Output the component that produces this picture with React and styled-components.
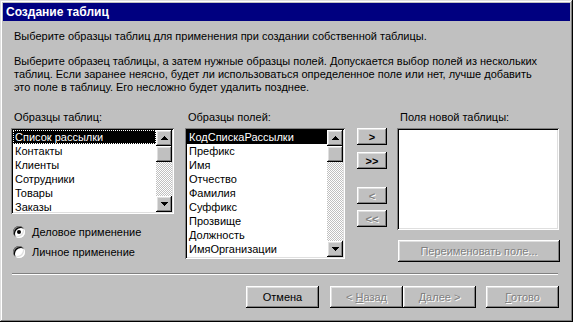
import React from 'react';
import styled, { createGlobalStyle } from 'styled-components';

const GlobalStyle = createGlobalStyle`
  html, body {
    margin: 0;
    padding: 0;
    background: #c0c0c0;
  }
  body {
    font-family: 'Liberation Sans', Arial, sans-serif;
    font-size: 11px;
    color: #000;
  }
`;

const raised = `
  box-shadow: inset -1px -1px #000, inset 1px 1px #fff,
    inset -2px -2px #808080, inset 2px 2px #dfdfdf;
`;

const sunken = `
  box-shadow: inset 1px 1px #808080, inset -1px -1px #fff,
    inset 2px 2px #000, inset -2px -2px #dfdfdf;
`;

const Window = styled.div`
  width: 573px;
  height: 322px;
  box-sizing: border-box;
  padding: 3px;
  background: #c0c0c0;
  box-shadow: inset -1px -1px #000, inset 1px 1px #dfdfdf,
    inset -2px -2px #808080, inset 2px 2px #fff;
  display: flex;
  flex-direction: column;
`;

const TitleBar = styled.div`
  height: 18px;
  flex: none;
  background: #000080;
  color: #fff;
  font-weight: bold;
  font-size: 12px;
  display: flex;
  align-items: center;
  padding-left: 3px;
`;

const Intro = styled.div`
  padding: 9px 0 0 11px;
  line-height: 13px;
`;

const Para = styled.p`
  margin: ${p => p.$mt || 0}px 0 0 0;
`;

const Columns = styled.div`
  display: flex;
  margin-top: 17px;
  padding-left: 8px;
  height: 162px;
`;

const Column = styled.div`
  width: ${p => p.$w}px;
  margin-left: ${p => p.$ml || 0}px;
  display: flex;
  flex-direction: column;
`;

const Label = styled.div`
  height: 13px;
  line-height: 13px;
  padding-left: 3px;
`;

const ListBox = styled.div`
  margin-top: 4px;
  height: ${p => p.$h}px;
  box-sizing: border-box;
  padding: 2px;
  background: #fff;
  ${sunken}
  display: flex;
  overflow: hidden;
`;

const Items = styled.div`
  flex: 1;
  overflow: hidden;
`;

const Item = styled.div`
  height: 14px;
  line-height: 14px;
  padding-left: 2px;
  white-space: nowrap;
  background: ${p => (p.$sel ? '#000' : 'transparent')};
  color: ${p => (p.$sel ? '#fff' : '#000')};
  outline: ${p => (p.$focus ? '1px dotted #fff' : 'none')};
  outline-offset: -1px;
`;

const ScrollBar = styled.div`
  width: 16px;
  flex: none;
  display: flex;
  flex-direction: column;
  background-color: #fff;
  background-image: conic-gradient(#c0c0c0 25%, #fff 0 50%, #c0c0c0 0 75%, #fff 0);
  background-size: 2px 2px;
`;

const ScrollButton = styled.div`
  width: 16px;
  height: 16px;
  flex: none;
  background: #c0c0c0;
  ${raised}
  display: flex;
  align-items: center;
  justify-content: center;
`;

const Track = styled.div`
  flex: 1;
`;

const RadioGroup = styled.div`
  margin-top: 8px;
  display: flex;
  flex-direction: column;
`;

const RadioRow = styled.label`
  height: 20px;
  display: flex;
  align-items: center;
  padding-left: 2px;
  gap: 7px;
`;

const RadioCircle = styled.span`
  width: 12px;
  height: 12px;
  border-radius: 50%;
  background: #fff;
  ${sunken}
  position: relative;
  flex: none;

  &::after {
    content: '';
    display: ${p => (p.$on ? 'block' : 'none')};
    position: absolute;
    left: 4px;
    top: 4px;
    width: 4px;
    height: 4px;
    border-radius: 50%;
    background: #000;
  }
`;

const Button = styled.div`
  width: ${p => p.$w}px;
  height: ${p => p.$h || 22}px;
  margin-top: ${p => p.$mt || 0}px;
  margin-left: ${p => p.$ml || 0}px;
  box-sizing: border-box;
  background: #c0c0c0;
  ${raised}
  display: flex;
  align-items: center;
  justify-content: center;
  white-space: pre;
  font-weight: ${p => (p.$bold ? 'bold' : 'normal')};
  color: ${p => (p.$disabled ? '#808080' : '#000')};
  text-shadow: ${p => (p.$disabled ? '1px 1px #fff' : 'none')};
`;

const Separator = styled.div`
  margin: 0 0 0 9px;
  width: 546px;
  height: 0;
  border-top: 1px solid #808080;
  border-bottom: 1px solid #fff;
`;

const ButtonRow = styled.div`
  display: flex;
  justify-content: flex-end;
  margin-top: 11px;
  padding-right: 11px;
`;

const Arrow = ({ down }) => (
  <svg width="7" height="4" viewBox="0 0 7 4">
    <path d={down ? 'M0 0H7L3.5 4Z' : 'M0 4H7L3.5 0Z'} fill="#000" shapeRendering="crispEdges" />
  </svg>
);

const Scroll = () => (
  <ScrollBar>
    <ScrollButton><Arrow /></ScrollButton>
    <ScrollButton />
    <Track />
    <ScrollButton><Arrow down /></ScrollButton>
  </ScrollBar>
);

const tables = ['Список рассылки', 'Контакты', 'Клиенты', 'Сотрудники', 'Товары', 'Заказы'];
const fields = [
  'КодСпискаРассылки', 'Префикс', 'Имя', 'Отчество', 'Фамилия', 'Суффикс',
  'Прозвище', 'Должность', 'ИмяОрганизации',
];

export default function App() {
  return (
    <>
      <GlobalStyle />
      <Window>
        <TitleBar>Создание таблиц</TitleBar>
        <Intro>
          <Para>Выберите образцы таблиц для применения при создании собственной таблицы.</Para>
          <Para $mt={12}>
            Выберите образец таблицы, а затем нужные образцы полей. Допускается выбор полей из нескольких<br />
            таблиц. Если заранее неясно, будет ли использоваться определенное поле или нет, лучше добавить<br />
            это поле в таблицу. Его несложно будет удалить позднее.
          </Para>
        </Intro>

        <Columns>
          <Column $w={163}>
            <Label>Образцы таблиц:</Label>
            <ListBox $h={86}>
              <Items>
                {tables.map((t, i) => (
                  <Item key={t} $sel={i === 0} $focus={i === 0}>{t}</Item>
                ))}
              </Items>
              <Scroll />
            </ListBox>
            <RadioGroup>
              <RadioRow><RadioCircle $on />Деловое применение</RadioRow>
              <RadioRow><RadioCircle />Личное применение</RadioRow>
            </RadioGroup>
          </Column>

          <Column $w={160} $ml={11}>
            <Label>Образцы полей:</Label>
            <ListBox $h={131}>
              <Items>
                {fields.map((f, i) => (
                  <Item key={f} $sel={i === 0}>{f}</Item>
                ))}
              </Items>
              <Scroll />
            </ListBox>
          </Column>

          <Column $w={30} $ml={12}>
            <Button $w={30} $h={17} $mt={17} $bold>&gt;</Button>
            <Button $w={30} $h={17} $mt={7} $bold>&gt;&gt;</Button>
            <Button $w={30} $h={17} $mt={18} $bold $disabled>&lt;</Button>
            <Button $w={30} $h={17} $mt={6} $bold $disabled>&lt;&lt;</Button>
          </Column>

          <Column $w={162} $ml={10}>
            <Label>Поля новой таблицы:</Label>
            <ListBox $h={102} />
            <Button $w={162} $mt={10} $ml={1} $disabled>Переименовать поле...</Button>
          </Column>
        </Columns>

        <Separator />

        <ButtonRow>
          <Button $w={73}>Отмена</Button>
          <Button $w={73} $ml={11} $disabled>{'< '}<u>Н</u>азад</Button>
          <Button $w={73} $disabled><u>Д</u>{'алее >'}</Button>
          <Button $w={73} $ml={10} $disabled><u>Г</u>отово</Button>
        </ButtonRow>
      </Window>
    </>
  );
}
